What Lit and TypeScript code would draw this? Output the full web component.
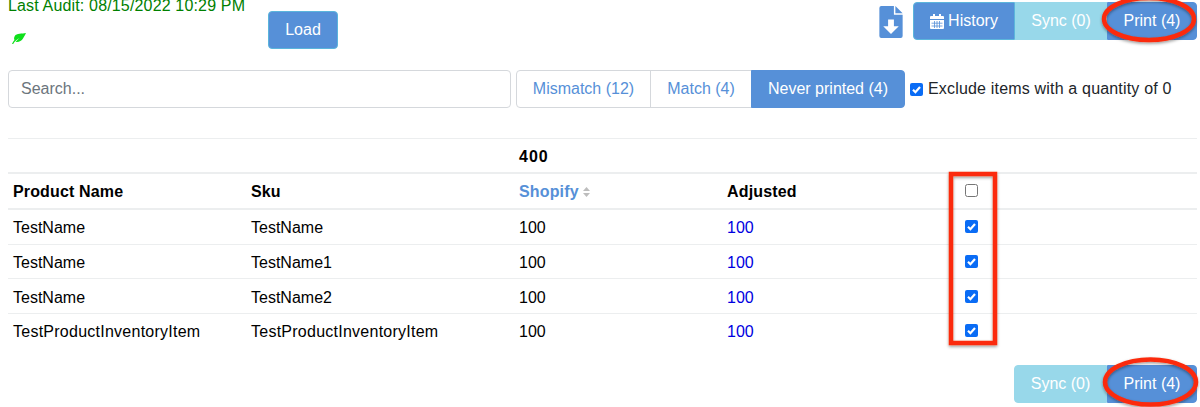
import { LitElement, html, css, svg } from "lit";
import { customElement } from "lit/decorators.js";

const rows = [
  ["TestName", "TestName"],
  ["TestName", "TestName1"],
  ["TestName", "TestName2"],
  ["TestProductInventoryItem", "TestProductInventoryItem"],
];

@customElement("app-root")
export class AppRoot extends LitElement {
  static styles = css`
    :host { display: block; position: relative; width: 1200px; height: 407px; overflow: hidden; background: #fff;
      font-family: "Liberation Sans", Arial, sans-serif; font-size: 16px; color: #212529; }
    .page { padding: 0 3px 0 8px; display: flex; flex-direction: column; }
    .top { display: flex; height: 70px; align-items: flex-start; }
    .audit { width: 260px; margin-top: -3px; color: #008000; font-size: 16px; letter-spacing: .16px; line-height: 18px; }
    .leaf { display: block; margin: 18px 0 0 4px; }
    .load { margin: 11px 0 0 0; width: 70px; }
    .btn { height: 38px; box-sizing: border-box; display: flex; align-items: center; justify-content: center;
      background: #5690d8; color: #fff; border: 1px solid #5690d8; font-size: 16px; white-space: nowrap; }
    .load { border-color: #5bb5dc; border-radius: 4px; }
    .right { margin-left: auto; display: flex; align-items: flex-start; margin-top: 2px; }
    .file { margin: 4px 10px 0 0; display: block; }
    .group { display: flex; }
    .hist { width: 102px; gap: 4px; border-radius: 4px 0 0 4px; border-color: #5bb5dc; }
    .sync { width: 92px; background: #98d8ea; border-color: #98d8ea; color: #fff; }
    .print { width: 90px; border-radius: 0 4px 4px 0; }
    .filters { display: flex; align-items: center; height: 38px; }
    .search { width: 503px; height: 38px; box-sizing: border-box; border: 1px solid #d5d8dc; border-radius: 4px;
      padding: 0 12px; color: #6c757d; display: flex; align-items: center; margin-right: 5px; }
    .tab { height: 38px; box-sizing: border-box; display: flex; align-items: center; justify-content: center;
      border: 1px solid #d5d8dc; color: #5690d8; margin-left: -1px; }
    .tab.first { margin-left: 0; width: 135px; border-radius: 4px 0 0 4px; }
    .tab.m { width: 102px; }
    .tab.on { width: 154px; background: #5690d8; border-color: #5690d8; color: #fff; border-radius: 0 4px 4px 0; }
    .exclude { display: flex; align-items: center; gap: 5px; margin-left: 5px; color: #212529; letter-spacing: .18px; }
    .cb { width: 13px; height: 13px; display: block; flex: none; }
    .table { margin-top: 30px; width: 1189px; border-top: 1px solid #eceeef; color: #000; }
    .row { display: grid; grid-template-columns: 238px 268px 208px 238px 1fr; align-items: center;
      border-bottom: 1px solid #eceeef; height: 33.67px; box-sizing: content-box; padding-left: 5px; }
    .row > span:not(.cell) { padding-top: 3px; }
    .row.total { height: 33px; border-bottom: 2px solid #eceeef; }
    .row.head { height: 34px; border-bottom: 2px solid #eceeef; font-weight: 700; letter-spacing: .15px; }
    .row.total > span { padding-top: 2px; }
    .row.head > span:not(.cell) { padding-top: 1px; }
    .row.head > .cell { padding-bottom: 2px; }
    .row.last { border-bottom: none; }
    .b { font-weight: 700; letter-spacing: 1px; }
    .long { letter-spacing: .25px; }
    .shop { color: #5690d8; display: flex; align-items: center; gap: 4px; }
    .link { color: #0000e0; }
    .foot { display: flex; justify-content: flex-end; margin-top: 17px; }
    .foot .sync { width: 93px; border-radius: 4px 0 0 4px; }
    .ann { position: absolute; left: 0; top: 0; pointer-events: none; }
  `;

  private check(on: boolean) {
    return on
      ? html`<svg class="cb" viewBox="0 0 13 13"><rect width="13" height="13" rx="2" fill="#0a6cf5"/><path d="M3 6.800 5.400 9.200 10 4" fill="none" stroke="#fff" stroke-width="2.200"/></svg>`
      : html`<svg class="cb" viewBox="0 0 13 13"><rect x=".5" y=".5" width="12" height="12" rx="2" fill="#fff" stroke="#767676"/></svg>`;
  }

  render() {
    return html`
      <div class="page">
        <div class="top">
          <div class="audit">
            Last Audit: 08/15/2022 10:29 PM
            <svg class="leaf" width="14" height="11" viewBox="0 0 14 11"><path d="M14 0C10 1 4.500 0 2.800 3 1.800 4.800 2 6 2.500 7 1.500 8 .8 9 0 11l1.200 0C2.200 9 4 7 7.500 5 5.500 7 4.500 8 3.500 8.800 6.500 9.500 9.500 8 11 5.500 12.300 3.500 13 2 14 0Z" fill="#0fe01b"/></svg>
          </div>
          <div class="btn load">Load</div>
          <div class="right">
            <svg class="file" width="24" height="32" viewBox="0 0 24 33"><path d="M2 0h13v9h9v22a2 2 0 0 1-2 2H2a2 2 0 0 1-2-2V2a2 2 0 0 1 2-2Z" fill="#5690d8"/><path d="M16.500 0 24 7.500h-7.500Z" fill="#5690d8"/><path d="M9 14h6v7h5l-8 8-8-8h5Z" fill="#fff"/></svg>
            <div class="group">
              <div class="btn hist">
                <svg width="14" height="15" viewBox="0 0 14 15"><path d="M3 0h2v2h4V0h2v2h2a1 1 0 0 1 1 1v2H0V3a1 1 0 0 1 1-1h2ZM0 6h14v8a1 1 0 0 1-1 1H1a1 1 0 0 1-1-1Z" fill="#fff"/><path d="M1.500 9.200h11M1.500 12h11M4.500 7v7M7 7v7M9.500 7v7" stroke="#5690d8" stroke-width=".8"/></svg>
                History
              </div>
              <div class="btn sync">Sync (0)</div>
              <div class="btn print">Print (4)</div>
            </div>
          </div>
        </div>
        <div class="filters">
          <div class="search">Search...</div>
          <div class="tab first">Mismatch (12)</div>
          <div class="tab m">Match (4)</div>
          <div class="tab on">Never printed (4)</div>
          <div class="exclude">${this.check(true)}Exclude items with a quantity of 0</div>
        </div>
        <div class="table">
          <div class="row total"><span></span><span></span><span class="b">400</span><span></span><span></span></div>
          <div class="row head">
            <span>Product Name</span><span>Sku</span>
            <span class="shop">Shopify <svg width="7" height="10" viewBox="0 0 7 10"><path d="M3.500 0 7 4H0ZM0 6h7L3.500 10Z" fill="#bdbdbd"/></svg></span>
            <span>Adjusted</span><span class="cell">${this.check(false)}</span>
          </div>
          ${rows.map((r, i) => html`
            <div class="row ${i === rows.length - 1 ? "last" : ""}">
              <span class="${r[0].length > 12 ? "long" : ""}">${r[0]}</span><span class="${r[1].length > 12 ? "long" : ""}">${r[1]}</span><span>100</span><span class="link">100</span><span class="cell">${this.check(true)}</span>
            </div>`)}
        </div>
        <div class="foot">
          <div class="btn sync">Sync (0)</div>
          <div class="btn print">Print (4)</div>
        </div>
      </div>
      <svg class="ann" width="1200" height="407">
        <defs><filter id="s" x="-20%" y="-20%" width="140%" height="140%"><feDropShadow dx="0" dy="1.500" stdDeviation="1.500" flood-color="#000" flood-opacity=".4"/></filter></defs>
        ${svg`
          <g fill="none" stroke="#fb2c0c" stroke-width="4.500" filter="url(#s)">
            <ellipse cx="1149" cy="19" rx="45" ry="21"/>
            <rect x="951" y="174" width="44" height="169"/>
            <ellipse cx="1150.500" cy="382" rx="45.500" ry="22.500"/>
          </g>`}
      </svg>
    `;
  }
}
